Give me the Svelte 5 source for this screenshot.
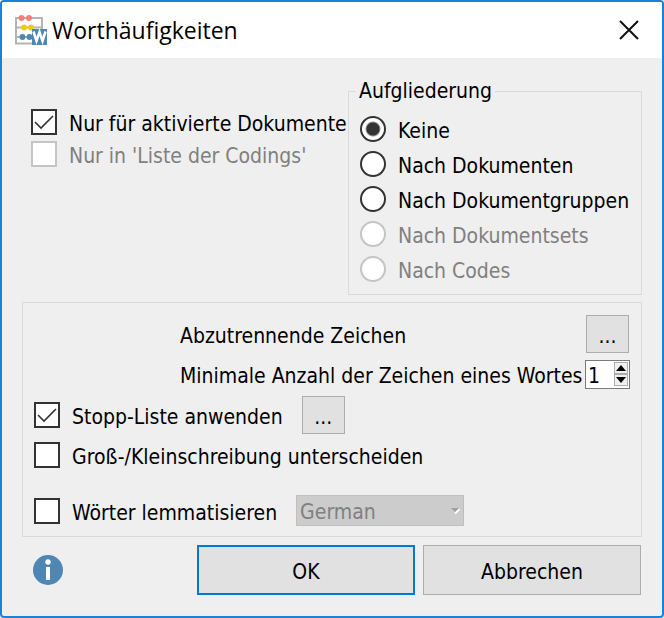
<script>
  let onlyActive = $state(true);
  let onlyCodings = $state(false);
  let breakdown = $state('none');
  let minChars = $state(1);
  let useStopList = $state(true);
  let caseSensitive = $state(false);
  let lemmatize = $state(false);
  let language = $state('German');

  const breakdowns = [
    { value: 'none', label: 'Keine' },
    { value: 'documents', label: 'Nach Dokumenten' },
    { value: 'groups', label: 'Nach Dokumentgruppen' },
    { value: 'sets', label: 'Nach Dokumentsets', disabled: true },
    { value: 'codes', label: 'Nach Codes', disabled: true },
  ];
</script>

<div class="dialog" role="dialog" aria-labelledby="dialog-title">
  <header class="titlebar">
    <svg class="logo" width="32" height="30" viewBox="0 0 32 30" aria-hidden="true">
      <path d="M1 2V29M27 2V14M0 3H28M0 12.500H28M0 22H17M0 28.500H18" fill="none" stroke="#b4b4b4" stroke-width="2" />
      <g fill="#fa8072"><circle cx="6.500" cy="3" r="3" /><circle cx="14" cy="3" r="3" /></g>
      <g fill="#efc91c"><circle cx="9" cy="12.500" r="3" /><circle cx="16" cy="12.500" r="3" /></g>
      <g fill="#4f86b3"><circle cx="7.500" cy="22" r="3" /><circle cx="14.500" cy="22" r="3" /></g>
      <rect x="17" y="14" width="15" height="16" fill="#4f86b3" />
      <path d="M18.500 16.500L21.500 26L24.500 17L27.500 26L30.500 16.500" fill="none" stroke="#fff" stroke-width="2.500" />
    </svg>
    <h1 id="dialog-title">Worthäufigkeiten</h1>
    <button class="close" type="button" aria-label="Schließen">
      <svg width="20" height="20" viewBox="0 0 20 20"><path d="M1 1L19 19M19 1L1 19" stroke="#111" stroke-width="2" /></svg>
    </button>
  </header>

  <form class="content" onsubmit={(e) => e.preventDefault()}>
    <div class="top">
      <div class="scope">
        <label class="choice">
          <input type="checkbox" bind:checked={onlyActive} />
          <span>Nur für aktivierte Dokumente</span>
        </label>
        <label class="choice off">
          <input type="checkbox" bind:checked={onlyCodings} disabled />
          <span>Nur in 'Liste der Codings'</span>
        </label>
      </div>

      <fieldset>
        <legend>Aufgliederung</legend>
        <div class="radios">
          {#each breakdowns as b (b.value)}
            <label class="choice" class:off={b.disabled}>
              <input type="radio" name="breakdown" value={b.value} bind:group={breakdown} disabled={b.disabled} />
              <span>{b.label}</span>
            </label>
          {/each}
        </div>
      </fieldset>
    </div>

    <div class="options">
      <div class="row indent">
        <span id="separators">Abzutrennende Zeichen</span>
        <button class="btn more" type="button" aria-labelledby="separators">...</button>
      </div>
      <div class="row indent min">
        <label for="min-chars">Minimale Anzahl der Zeichen eines Wortes</label>
        <div class="spin">
          <input id="min-chars" type="number" min="1" bind:value={minChars} />
          <div class="steps">
            <button type="button" aria-label="Mehr" onclick={() => minChars++}>
              <svg width="10" height="6" viewBox="0 0 10 6"><path d="M5 0L10 6H0Z" /></svg>
            </button>
            <button type="button" aria-label="Weniger" onclick={() => (minChars = Math.max(1, minChars - 1))}>
              <svg width="10" height="6" viewBox="0 0 10 6"><path d="M0 0H10L5 6Z" /></svg>
            </button>
          </div>
        </div>
      </div>
      <div class="row stop">
        <label class="choice">
          <input type="checkbox" bind:checked={useStopList} />
          <span>Stopp-Liste anwenden</span>
        </label>
        <button class="btn more" type="button" aria-label="Stopp-Liste bearbeiten">...</button>
      </div>
      <div class="row case">
        <label class="choice">
          <input type="checkbox" bind:checked={caseSensitive} />
          <span>Groß-/Kleinschreibung unterscheiden</span>
        </label>
      </div>
      <div class="row lemma">
        <label class="choice">
          <input type="checkbox" bind:checked={lemmatize} />
          <span>Wörter lemmatisieren</span>
        </label>
        <div class="select">
          <select aria-label="Sprache" bind:value={language} disabled={!lemmatize}>
            <option>German</option>
          </select>
          <svg width="9" height="6" viewBox="0 0 9 6" aria-hidden="true">
            <path d="M4 5.500L8.500 1" stroke="#fff" stroke-width="2" />
            <path d="M0 0H8L4 4Z" fill="#a0a0a0" />
          </svg>
        </div>
      </div>
    </div>

    <footer>
      <button class="info" type="button" aria-label="Hilfe">
        <svg width="30" height="30" viewBox="0 0 30 30">
          <circle cx="15" cy="15" r="15" fill="#4f86b3" />
          <circle cx="15" cy="7" r="2.700" fill="#fff" />
          <rect x="13" y="12" width="4" height="13" fill="#fff" />
        </svg>
      </button>
      <button class="btn action primary" type="submit">OK</button>
      <button class="btn action" type="button">Abbrechen</button>
    </footer>
  </form>
</div>

<style>
  :global(body) {
    margin: 0;
    background: #fff;
  }
  .dialog, .dialog * {
    box-sizing: border-box;
  }
  .dialog {
    min-height: 100vh;
    border: 2px solid #1a82d8;
    border-radius: 4px;
    background: #efefef;
    color: #000;
    font: 21px/24px 'DejaVu Sans Condensed', 'DejaVu Sans', sans-serif;
    overflow: hidden;
  }
  input, select, button {
    font: inherit;
    color: inherit;
    margin: 0;
    padding: 0;
  }

  .titlebar {
    display: flex;
    align-items: center;
    height: 56px;
    padding: 0 23px 0 13px;
    background: #fff;
  }
  h1 {
    flex: 1;
    margin: 0 0 0 5px;
    font: 400 23px/32px 'Open Sans', sans-serif;
  }
  .close, .info {
    display: flex;
    border: 0;
    background: none;
  }

  .content {
    padding: 21px 20px;
  }
  .top {
    display: flex;
    justify-content: space-between;
  }
  .scope {
    display: flex;
    flex-direction: column;
    gap: 6px;
    padding: 30px 0 0 9px;
  }
  .choice {
    display: flex;
    align-items: center;
    gap: 12px;
    height: 26px;
    white-space: nowrap;
  }
  .choice span, #separators {
    padding-top: 4px;
  }
  .indent label {
    padding-top: 2px;
  }
  .off {
    color: #808080;
  }
  input[type='checkbox'], input[type='radio'] {
    appearance: none;
    flex: none;
    width: 26px;
    height: 26px;
    border: 2px solid #333;
    background: #fff center no-repeat;
  }
  input[type='checkbox']:checked {
    background-image: url("data:image/svg+xml,%3Csvg xmlns='http://www.w3.org/2000/svg' width='22' height='22'%3E%3Cpath d='M2 11L8 17L20 5' fill='none' stroke='%23333' stroke-width='1.600'/%3E%3C/svg%3E");
  }
  input[type='radio'] {
    border-radius: 50%;
  }
  input[type='radio']:checked {
    background-image: radial-gradient(circle, #333 6px, #fff 8px);
  }
  input[type='checkbox']:disabled, input[type='radio']:disabled {
    border-color: #c4c4c4;
  }

  fieldset {
    width: 294px;
    margin: 0;
    padding: 0 7px 12px;
    border: 1px solid #dadada;
  }
  legend {
    padding: 0 3px;
  }
  .radios {
    display: flex;
    flex-direction: column;
    gap: 9px;
    padding: 13px 4px 0;
  }

  .options {
    display: flex;
    flex-direction: column;
    gap: 7px;
    margin-top: 7px;
    padding: 12px 11px 10px;
    border: 1px solid #dadada;
  }
  .row {
    display: flex;
    align-items: center;
  }
  .indent {
    justify-content: space-between;
    padding: 0 1px 0 146px;
  }
  .min {
    padding-right: 0;
    white-space: nowrap;
  }
  .stop {
    gap: 19px;
  }
  .case {
    padding-top: 1px;
  }
  .lemma {
    gap: 19px;
    margin-top: 20px;
  }

  .btn {
    padding-top: 3px;
    border: 1px solid #adadad;
    background: #e1e1e1;
  }
  .more {
    width: 43px;
    height: 38px;
  }
  .spin {
    display: flex;
    flex: none;
    width: 45px;
    height: 29px;
    border: 1px solid #7a7a7a;
    background: #fff;
  }
  .spin input {
    flex: 1;
    min-width: 0;
    padding: 2px 0 0 2px;
    border: 0;
    background: none;
    appearance: textfield;
  }
  .spin input::-webkit-inner-spin-button {
    appearance: none;
  }
  .steps {
    display: flex;
    flex-direction: column;
    width: 15px;
    padding: 1px 1px 2px 0;
  }
  .steps button {
    display: flex;
    flex: 1;
    align-items: center;
    justify-content: center;
    border: 1px solid #adadad;
    background: #f0f0f0;
  }

  .select {
    position: relative;
    width: 168px;
  }
  select {
    appearance: none;
    display: block;
    width: 100%;
    height: 31px;
    padding: 2px 3px 0;
    border: 1px solid #bfbfbf;
    border-radius: 0;
    background: #ccc;
  }
  select:disabled {
    color: #808080;
    opacity: 1;
  }
  .select svg {
    position: absolute;
    top: 13px;
    right: 4px;
    pointer-events: none;
  }

  footer {
    display: flex;
    align-items: center;
    gap: 8px;
    padding: 8px 1px 0 11px;
  }
  .info {
    margin-right: auto;
  }
  .action {
    width: 218px;
    height: 50px;
  }
  .primary {
    border: 2px solid #0078d7;
  }
</style>
